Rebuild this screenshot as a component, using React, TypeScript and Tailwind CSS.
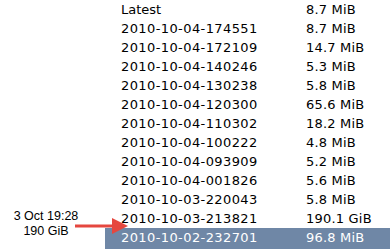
import React from 'react';

const rows: { name: string; size: string }[] = [
  { name: 'Latest', size: '8.7 MiB' },
  { name: '2010-10-04-174551', size: '8.7 MiB' },
  { name: '2010-10-04-172109', size: '14.7 MiB' },
  { name: '2010-10-04-140246', size: '5.3 MiB' },
  { name: '2010-10-04-130238', size: '5.8 MiB' },
  { name: '2010-10-04-120300', size: '65.6 MiB' },
  { name: '2010-10-04-110302', size: '18.2 MiB' },
  { name: '2010-10-04-100222', size: '4.8 MiB' },
  { name: '2010-10-04-093909', size: '5.2 MiB' },
  { name: '2010-10-04-001826', size: '5.6 MiB' },
  { name: '2010-10-03-220043', size: '5.8 MiB' },
  { name: '2010-10-03-213821', size: '190.1 GiB' },
  { name: '2010-10-02-232701', size: '96.8 MiB' },
];

const App: React.FC = () => {
  return (
    <div className="relative w-[390px] h-[249px] overflow-hidden bg-white flex">
      {/* Annotation */}
      <div className="w-[105px] flex flex-col justify-end items-center pb-[10px] pr-[13px] font-['Liberation_Sans',Arial,sans-serif] text-[12.5px] leading-[15px] text-black">
        <div>3 Oct 19:28</div>
        <div>190 GiB</div>
      </div>

      {/* Snapshot list */}
      <div className="flex-1 flex flex-col font-['DejaVu_Sans',sans-serif] text-[13px] text-black">
        {rows.map((r, i) => {
          const selected = i === rows.length - 1;
          return (
            <div
              key={r.name}
              className={`flex pl-4 pt-[1px] leading-[18px] ${selected ? 'h-[21px] bg-[#6f87a6] text-white' : 'h-[19px]'}`}
            >
              <div className={`w-[185px] ${i === 0 ? '' : 'tracking-[0.4px]'}`}>{r.name}</div>
              <div className="tracking-[0.2px]">{r.size}</div>
            </div>
          );
        })}
      </div>

      {/* Arrow */}
      <svg className="absolute left-0 top-0 pointer-events-none" width="390" height="249">
        <line x1="75" y1="226" x2="114" y2="226" stroke="#e5473f" strokeWidth="3" />
        <polygon points="112,218 128,226 112,234" fill="#e5473f" />
      </svg>
    </div>
  );
};

export default App;
